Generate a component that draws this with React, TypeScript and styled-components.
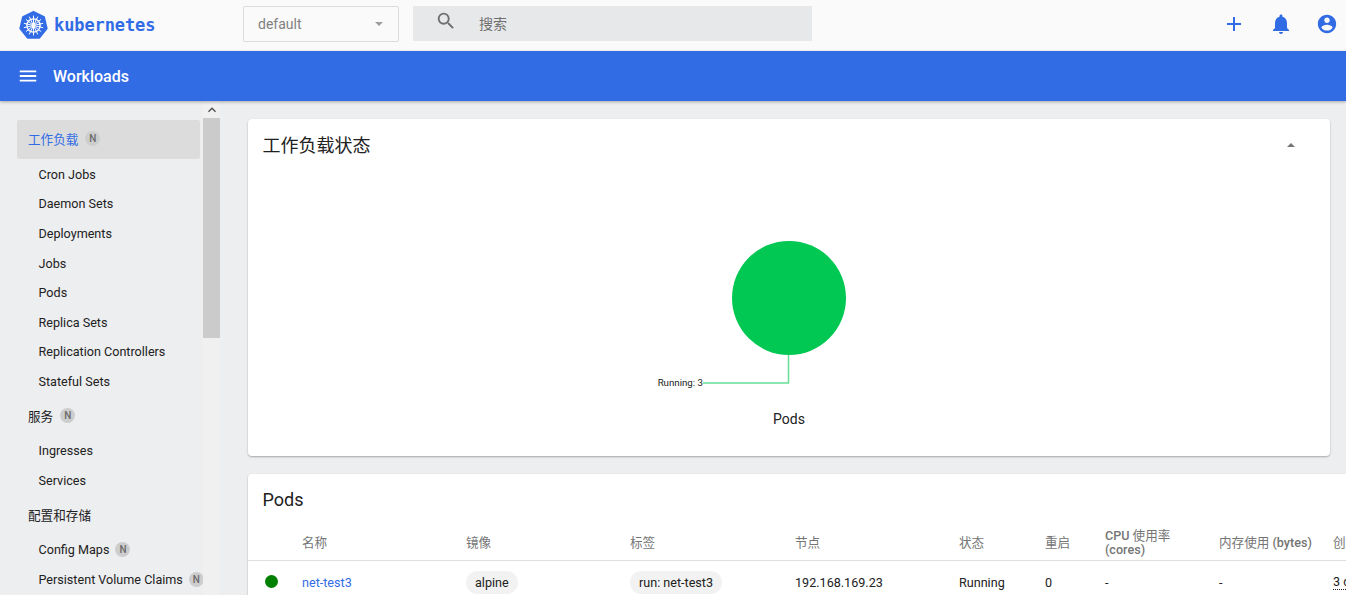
import React from "react";
import styled, { createGlobalStyle } from "styled-components";

const Global = createGlobalStyle`
  html, body { margin: 0; padding: 0; height: 100%; overflow: hidden; }
  body { font-family: Roboto, "Noto Sans CJK SC", sans-serif; background: #edeef0; color: #212121; }
  * { box-sizing: border-box; }
`;

const Page = styled.div`
  width: 1346px;
  height: 595px;
  display: flex;
  flex-direction: column;
  overflow: hidden;
`;

const Toolbar = styled.header`
  height: 51px;
  flex: none;
  background: #fafafa;
  display: flex;
  align-items: center;
  padding-bottom: 4px;
`;

const Brand = styled.div`
  width: 243px;
  margin-top: 4px;
  padding-left: 19px;
  display: flex;
  align-items: center;
  gap: 6px;
  flex: none;
`;

const BrandName = styled.span`
  font-family: "DejaVu Sans Mono", monospace;
  font-size: 17px;
  font-weight: 700;
  letter-spacing: -0.1px;
  color: #326ce5;
  line-height: 1;
`;

const NamespaceSelect = styled.div`
  width: 156px;
  height: 36px;
  border: 1px solid #dcdcdc;
  border-radius: 2px;
  margin-right: 14px;
  padding: 0 15px 0 14px;
  display: flex;
  align-items: center;
  justify-content: space-between;
  font-size: 14px;
  color: #808080;
`;

const Caret = styled.span<{ $up?: boolean }>`
  width: 0;
  height: 0;
  border-left: 4.5px solid transparent;
  border-right: 4.5px solid transparent;
  ${(p) => (p.$up ? "border-bottom: 4.5px solid #757575;" : "border-top: 4.5px solid #9e9e9e;")}
`;

const SearchBox = styled.div`
  width: 399px;
  height: 35px;
  background: #e6e8e9;
  display: flex;
  align-items: center;
  padding: 0 0 2px 22px;
  gap: 22px;
  font-size: 14px;
  color: #6f6f6f;
`;

const SearchGlyph = styled.svg`
  margin-top: -3px;
`;

const ToolActions = styled.div`
  margin-left: auto;
  display: flex;
  align-items: center;
  gap: 23px;
  padding-right: 8px;
  color: #326ce5;
`;

const ActionBar = styled.div`
  height: 50px;
  flex: none;
  background: #326ce5;
  box-shadow: 0 1px 3px rgba(0, 0, 0, 0.3);
  display: flex;
  align-items: center;
  padding-left: 17px;
  gap: 14px;
  color: #fff;
  position: relative;
  z-index: 1;
`;

const ActionTitle = styled.h1`
  margin: 0;
  padding-top: 1px;
  font-size: 16px;
  font-weight: 500;
  line-height: 50px;
`;

const Body = styled.div`
  flex: 1;
  display: flex;
  min-height: 0;
`;

const Sidebar = styled.aside`
  width: 220px;
  flex: none;
  display: flex;
  overflow: hidden;
`;

const Nav = styled.nav`
  width: 203px;
  flex: none;
  padding: 19px 3px 0 17px;
`;

const NavGroup = styled.div<{ $active?: boolean }>`
  height: 39px;
  display: flex;
  align-items: center;
  padding-left: 11px;
  padding-bottom: ${(p) => (p.$active ? "2px" : "0")};
  margin-bottom: ${(p) => (p.$active ? "0" : "0.6px")};
  gap: 7px;
  font-size: 12.6px;
  border-radius: 2px;
  color: ${(p) => (p.$active ? "#326ce5" : "#212121")};
  background: ${(p) => (p.$active ? "#dcdcdc" : "transparent")};
`;

const NavItem = styled.div`
  height: 29.6px;
  display: flex;
  align-items: center;
  padding: 1px 0 0 21.5px;
  gap: 6px;
  font-size: 12.6px;
  white-space: nowrap;
`;

const NBadge = styled.span`
  width: 15px;
  height: 15px;
  border-radius: 50%;
  background: #cdcdcd;
  color: #6a6a6a;
  font-size: 10px;
  font-weight: 500;
  display: flex;
  align-items: center;
  justify-content: center;
  flex: none;
`;

const ScrollTrack = styled.div`
  width: 17px;
  flex: none;
  background: #f0f0f1;
  display: flex;
  flex-direction: column;
  align-items: center;
`;

const ScrollButton = styled.div`
  height: 17px;
  display: flex;
  align-items: center;
  justify-content: center;
  color: #505050;
`;

const ScrollThumb = styled.div`
  width: 17px;
  height: 220px;
  background: #cbcbcb;
`;

const Main = styled.main`
  flex: 1;
  min-width: 0;
  padding: 18px 16px 0 28px;
  display: flex;
  flex-direction: column;
  gap: 18px;
`;

const Card = styled.section`
  background: #fff;
  border-radius: 4px;
  box-shadow: 0 1px 2px rgba(0, 0, 0, 0.3);
`;

const StatusCard = styled(Card)`
  height: 337px;
  flex: none;
`;

const CardHeader = styled.div`
  height: 52px;
  display: flex;
  align-items: center;
  justify-content: space-between;
  padding: 0 35px 0 14.5px;
`;

const CardTitle = styled.h2`
  margin: 0;
  padding-top: 1px;
  font-size: 18px;
  font-weight: 400;
  line-height: 52px;
  color: #212121;
`;

const ChartWrap = styled.div`
  display: flex;
  justify-content: center;
`;

const PodsCard = styled(Card)`
  width: 1180px;
  flex: none;
  border-radius: 4px 0 0 0;
`;

const PodsHeader = styled.div`
  height: 51px;
  padding-left: 14.5px;
  display: flex;
  align-items: center;
`;

const Columns = "37px 164px 164px 165px 164px 86px 60px 114px 114px 100px";

const HeaderRow = styled.div`
  height: 36px;
  padding-left: 17px;
  display: grid;
  grid-template-columns: ${Columns};
  align-items: center;
  border-bottom: 1px solid #e0e0e0;
  font-size: 12.6px;
  font-weight: 400;
  color: #757575;
  line-height: 14px;
  white-space: nowrap;
`;

const HeaderLatin = styled.span`
  font-weight: 500;
`;

const DataRow = styled.div`
  height: 42px;
  padding-left: 17px;
  display: grid;
  grid-template-columns: ${Columns};
  align-items: center;
  font-size: 12.6px;
  white-space: nowrap;
`;

const StatusDot = styled.span`
  width: 13px;
  height: 13px;
  border-radius: 50%;
  background: #008000;
  margin-top: -1px;
`;

const PodLink = styled.a`
  color: #326ce5;
  text-decoration: none;
`;

const Chip = styled.span`
  justify-self: start;
  height: 23px;
  line-height: 23px;
  padding: 0 9px;
  border-radius: 12px;
  background: #f2f2f2;
  color: #212121;
`;

const Age = styled.span`
  border-bottom: 1px dotted #212121;
  justify-self: start;
`;

const Logo = () => (
  <svg width="29" height="29" viewBox="0 0 29 29">
    <polygon
      points="14.5,0.8 25.2,5.9 27.9,17.5 20.5,26.9 8.5,26.9 1.1,17.5 3.8,5.9"
      fill="#326ce5"
      stroke="#326ce5"
      strokeWidth="1.5"
      strokeLinejoin="round"
    />
    <g stroke="#fff" strokeWidth="1" fill="none" strokeLinecap="round">
      <circle cx="14.5" cy="14.5" r="6.6" strokeWidth="1.4" />
      <path d="M14.5 5V24M7.2 8.6 21.8 20.4M21.8 8.6 7.2 20.4M5.3 16.6 23.7 12.4M23.7 16.6 5.3 12.4M10.4 23 18.6 6M18.6 23 10.4 6" />
    </g>
    <circle cx="14.5" cy="14.5" r="1.5" fill="#fff" />
  </svg>
);

const MaterialIcon = ({ d, size }: { d: string; size: number }) => (
  <svg width={size} height={size} viewBox="0 0 24 24" fill="currentColor">
    <path d={d} />
  </svg>
);

const SearchIcon = () => (
  <SearchGlyph width="22" height="22" viewBox="0 0 24 24" fill="#6f6f6f">
    <path d="M15.5 14h-.79l-.28-.27A6.47 6.47 0 0 0 16 9.5 6.5 6.5 0 1 0 9.5 16c1.61 0 3.09-.59 4.23-1.57l.27.28v.79l5 4.99L20.49 19l-4.99-5zm-6 0C7.01 14 5 11.99 5 9.5S7.01 5 9.5 5 14 7.01 14 9.5 11.99 14 9.5 14z" />
  </SearchGlyph>
);

const PLUS = "M19 13h-6v6h-2v-6H5v-2h6V5h2v6h6v2z";
const BELL =
  "M12 22c1.1 0 2-.9 2-2h-4c0 1.1.9 2 2 2zm6-6v-5c0-3.07-1.63-5.64-4.5-6.32V4c0-.83-.67-1.5-1.5-1.5s-1.5.67-1.5 1.5v.68C7.64 5.36 6 7.92 6 11v5l-2 2v1h16v-1l-2-2z";
const ACCOUNT =
  "M12 2C6.48 2 2 6.48 2 12s4.48 10 10 10 10-4.48 10-10S17.52 2 12 2zm0 3c1.66 0 3 1.34 3 3s-1.34 3-3 3-3-1.34-3-3 1.34-3 3-3zm0 14.2c-2.5 0-4.71-1.28-6-3.22.03-1.99 4-3.08 6-3.08 1.99 0 5.97 1.09 6 3.08-1.29 1.94-3.5 3.22-6 3.22z";
const MENU = "M3 18h18v-2H3v2zm0-5h18v-2H3v2zm0-7v2h18V6H3z";
const CHEVRON = "M12 8l-6 6 1.41 1.41L12 10.83l4.59 4.58L18 14z";

const workloads = [
  "Cron Jobs",
  "Daemon Sets",
  "Deployments",
  "Jobs",
  "Pods",
  "Replica Sets",
  "Replication Controllers",
  "Stateful Sets",
];

const PodsChart = () => (
  <svg width="400" height="270" viewBox="0 0 400 270">
    <circle cx="200" cy="127" r="57" fill="#00c853" />
    <polyline points="199.5,184 199.5,212 114,212" fill="none" stroke="#00c853" strokeOpacity="0.6" strokeWidth="1.5" />
    <text x="114" y="215" textAnchor="end" fontFamily="Roboto, sans-serif" fontSize="9.7" fill="#212121">
      Running: 3
    </text>
    <text x="200" y="253" textAnchor="middle" fontFamily="Roboto, sans-serif" fontSize="14" fill="#212121">
      Pods
    </text>
  </svg>
);

export default function App() {
  return (
    <Page>
      <Global />
      <Toolbar>
        <Brand>
          <Logo />
          <BrandName>kubernetes</BrandName>
        </Brand>
        <NamespaceSelect>
          default
          <Caret />
        </NamespaceSelect>
        <SearchBox>
          <SearchIcon />
          搜索
        </SearchBox>
        <ToolActions>
          <MaterialIcon d={PLUS} size={24} />
          <MaterialIcon d={BELL} size={24} />
          <MaterialIcon d={ACCOUNT} size={22} />
        </ToolActions>
      </Toolbar>
      <ActionBar>
        <MaterialIcon d={MENU} size={22} />
        <ActionTitle>Workloads</ActionTitle>
      </ActionBar>
      <Body>
        <Sidebar>
          <Nav>
            <NavGroup $active>
              工作负载
              <NBadge>N</NBadge>
            </NavGroup>
            {workloads.map((w) => (
              <NavItem key={w}>{w}</NavItem>
            ))}
            <NavGroup>
              服务
              <NBadge>N</NBadge>
            </NavGroup>
            <NavItem>Ingresses</NavItem>
            <NavItem>Services</NavItem>
            <NavGroup>配置和存储</NavGroup>
            <NavItem>
              Config Maps
              <NBadge>N</NBadge>
            </NavItem>
            <NavItem>
              Persistent Volume Claims
              <NBadge>N</NBadge>
            </NavItem>
          </Nav>
          <ScrollTrack>
            <ScrollButton>
              <MaterialIcon d={CHEVRON} size={16} />
            </ScrollButton>
            <ScrollThumb />
          </ScrollTrack>
        </Sidebar>
        <Main>
          <StatusCard>
            <CardHeader>
              <CardTitle>工作负载状态</CardTitle>
              <Caret $up />
            </CardHeader>
            <ChartWrap>
              <PodsChart />
            </ChartWrap>
          </StatusCard>
          <PodsCard>
            <PodsHeader>
              <CardTitle>Pods</CardTitle>
            </PodsHeader>
            <HeaderRow>
              <span />
              <span>名称</span>
              <span>镜像</span>
              <span>标签</span>
              <span>节点</span>
              <span>状态</span>
              <span>重启</span>
              <span>
                <HeaderLatin>CPU</HeaderLatin> 使用率
                <br />
                <HeaderLatin>(cores)</HeaderLatin>
              </span>
              <span>
                内存使用 <HeaderLatin>(bytes)</HeaderLatin>
              </span>
              <span>创建时间</span>
            </HeaderRow>
            <DataRow>
              <StatusDot />
              <PodLink>net-test3</PodLink>
              <Chip>alpine</Chip>
              <Chip>run: net-test3</Chip>
              <span>192.168.169.23</span>
              <span>Running</span>
              <span>0</span>
              <span>-</span>
              <span>-</span>
              <Age>3 days ago</Age>
            </DataRow>
          </PodsCard>
        </Main>
      </Body>
    </Page>
  );
}
